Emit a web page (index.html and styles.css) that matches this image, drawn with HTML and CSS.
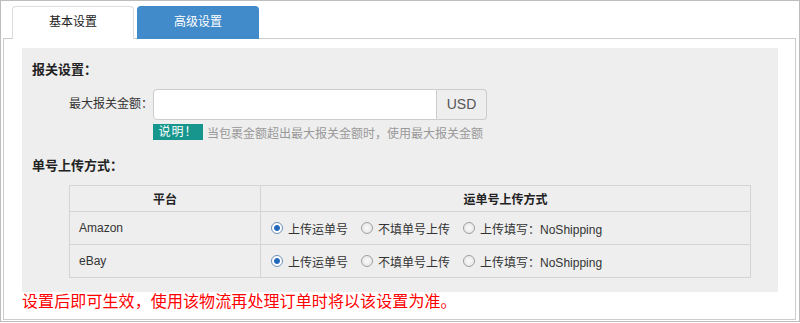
FILE: index.html
```html
<!DOCTYPE html>
<html lang="zh-CN">
<head>
    <meta charset="UTF-8">
    <title>物流设置</title>
    <link rel="stylesheet" href="styles.css">
</head>
<body>
    <div class="frame">
        <div class="tabs">
            <a class="tab active">基本设置</a>
            <a class="tab primary">高级设置</a>
        </div>
        <div class="panel">
            <div class="box">
                <h4>报关设置：</h4>
                <div class="form-row">
                    <label for="max-amount">最大报关金额：</label>
                    <div class="input-group">
                        <input id="max-amount" type="text">
                        <span class="addon">USD</span>
                    </div>
                </div>
                <div class="help">
                    <span class="badge">说明！</span>
                    <span class="help-text">当包裹金额超出最大报关金额时，使用最大报关金额</span>
                </div>

                <h4 class="second">单号上传方式：</h4>
                <table class="upload-table">
                    <thead>
                        <tr>
                            <th class="col-platform">平台</th>
                            <th>运单号上传方式</th>
                        </tr>
                    </thead>
                    <tbody>
                        <tr>
                            <td>Amazon</td>
                            <td>
                                <div class="opts">
                                    <label class="opt"><input type="radio" name="amazon" checked>上传运单号</label>
                                    <label class="opt"><input type="radio" name="amazon">不填单号上传</label>
                                    <label class="opt"><input type="radio" name="amazon">上传填写：NoShipping</label>
                                </div>
                            </td>
                        </tr>
                        <tr>
                            <td>eBay</td>
                            <td>
                                <div class="opts">
                                    <label class="opt"><input type="radio" name="ebay" checked>上传运单号</label>
                                    <label class="opt"><input type="radio" name="ebay">不填单号上传</label>
                                    <label class="opt"><input type="radio" name="ebay">上传填写：NoShipping</label>
                                </div>
                            </td>
                        </tr>
                    </tbody>
                </table>
            </div>
            <p class="note">设置后即可生效，使用该物流再处理订单时将以该设置为准。</p>
        </div>
    </div>
</body>
</html>
```

FILE: styles.css
```css
* {
    box-sizing: border-box;
}
body {
    margin: 0;
    background: #fff;
    font-family: "Liberation Sans", "Noto Sans CJK SC", sans-serif;
    font-size: 12px;
    color: #333;
}
.frame {
    width: 800px;
    height: 322px;
    border: 1px solid #bdbdbd;
    padding: 5px 3px 1px 1px;
}
.tabs {
    display: flex;
    gap: 3px;
    margin-left: 10px;
    position: relative;
    z-index: 1;
    margin-bottom: -1px;
}
.tab {
    width: 122px;
    height: 33px;
    line-height: 31px;
    text-align: center;
    border: 1px solid #ddd;
    border-bottom: none;
    border-radius: 4px 4px 0 0;
    background: #fff;
    color: #222;
}
.tab.primary {
    background: #428bca;
    border-color: #428bca;
    color: #fff;
}
.panel {
    border: 1px solid #ccc;
    margin-left: 1px;
    padding: 9px 17px 7px 18px;
}
.box {
    background: #eee;
    padding: 12px 0 14px 10px;
}
h4 {
    margin: 0;
    font-size: 13px;
    line-height: 20px;
    font-weight: bold;
    color: #222;
}
h4.second {
    margin-top: 16px;
}
.form-row {
    display: flex;
    margin-top: 9px;
    height: 31px;
}
.form-row label {
    width: 121px;
    text-align: right;
    line-height: 31px;
}
.input-group {
    display: flex;
    width: 334px;
}
.input-group input {
    width: 284px;
    height: 31px;
    border: 1px solid #ccc;
    border-radius: 4px 0 0 4px;
    background: #fff;
    padding: 0 8px;
    font: inherit;
}
.addon {
    width: 50px;
    height: 31px;
    line-height: 29px;
    text-align: center;
    border: 1px solid #ccc;
    border-left: none;
    border-radius: 0 4px 4px 0;
    background: #eee;
    color: #555;
    font-size: 14px;
}
.help {
    display: flex;
    align-items: center;
    margin-top: 4px;
    margin-left: 121px;
    height: 16px;
}
.badge {
    width: 50px;
    height: 16px;
    line-height: 16px;
    text-align: center;
    background: #17968e;
    color: #fff;
    font-size: 12px;
    letter-spacing: 1px;
}
.help-text {
    margin-left: 4px;
    color: #999;
}
.upload-table {
    border-collapse: collapse;
    margin: 9px 0 0 37px;
    width: 682px;
}
.upload-table th,
.upload-table td {
    border: 1px solid #d4d4d4;
    padding: 0;
}
.upload-table th {
    height: 26px;
    font-weight: bold;
    color: #222;
    text-align: center;
}
.upload-table td {
    height: 33px;
    padding-left: 9px;
}
.upload-table .col-platform {
    width: 191px;
}
.upload-table td + td {
    padding-left: 10px;
}
.opts {
    display: flex;
    align-items: center;
    gap: 13px;
}
.opt {
    display: flex;
    align-items: center;
}
.opt input {
    appearance: none;
    -webkit-appearance: none;
    width: 12px;
    height: 12px;
    margin: 0 5px 0 0;
    border: 1px solid #a0a0a0;
    border-radius: 50%;
    background: radial-gradient(circle, #fafafa 0, #e2e2e2 100%);
}
.opt input:checked {
    border-color: #6d8fb5;
    background: radial-gradient(circle, #1f64b4 0, #2a6fc0 2.5px, #fff 3.5px);
}
.note {
    margin: 0;
    line-height: 20px;
    font-size: 16px;
    letter-spacing: 0.1px;
    color: #f00;
}
```
